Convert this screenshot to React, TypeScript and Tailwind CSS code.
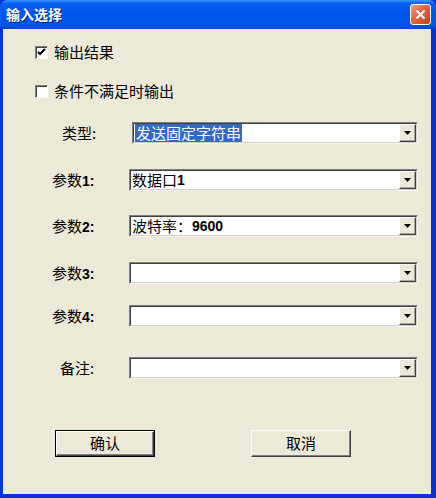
import React from 'react';

const cjk = "font-['Noto_Sans_CJK_SC','Noto_Sans',sans-serif]";

const Arrow = () => (
    <div className="w-[17px] h-full flex items-center justify-center bg-[#ECE9D8] border border-t-white border-l-white border-r-[#404040] border-b-[#404040] shadow-[inset_-1px_-1px_0_#ACA899]">
        <svg width="7" height="4" viewBox="0 0 7 4">
            <path d="M0 0h7L3.5 4z" fill="#000" />
        </svg>
    </div>
);

const Combo = ({ children, className = '' }: { children?: React.ReactNode; className?: string }) => (
    <div className={`h-[22px] flex items-stretch bg-white border border-t-[#808080] border-l-[#808080] border-r-[#F5F4EE] border-b-[#F5F4EE] ${className}`}>
        <div className="flex-1 flex items-stretch border border-t-[#404040] border-l-[#404040] border-r-[#D4D0C8] border-b-[#D4D0C8]">
            <div className="flex-1 flex items-center pl-[1px] whitespace-nowrap leading-[18px]">{children}</div>
            <Arrow />
        </div>
    </div>
);

const Num = ({ children }: { children: React.ReactNode }) => (
    <span className="font-['Liberation_Sans',sans-serif] font-bold text-[14px]">{children}</span>
);

const Check = ({ checked }: { checked?: boolean }) => (
    <div className="w-[13px] h-[13px] bg-white border border-t-[#808080] border-l-[#808080] border-r-white border-b-white shadow-[inset_1px_1px_0_#404040] flex items-center justify-center">
        {checked && (
            <svg width="9" height="9" viewBox="0 0 9 9">
                <path d="M1 4l2 2 5-5" stroke="#000" strokeWidth="2" fill="none" />
            </svg>
        )}
    </div>
);

const Button = ({ label, isDefault }: { label: string; isDefault?: boolean }) => (
    <div className={`w-[100px] h-[27px] ${isDefault ? 'border border-black' : ''}`}>
        <div className="w-full h-full flex items-center justify-center bg-[#ECE9D8] border border-t-white border-l-white border-r-[#404040] border-b-[#404040] shadow-[inset_-1px_-1px_0_#808080] text-[15px]">
            {label}
        </div>
    </div>
);

export default function App() {
    const rows = [
        { label: <>参数<Num>1:</Num></>, value: <>数据口<Num>1</Num></>, mt: 'mt-[24px]', pl: 'pl-[49px]' },
        { label: <>参数<Num>2:</Num></>, value: <>波特率：<Num>9600</Num></>, mt: 'mt-[23px]', pl: 'pl-[49px]' },
        { label: <>参数<Num>3:</Num></>, value: null, mt: 'mt-[24px]', pl: 'pl-[49px]' },
        { label: <>参数<Num>4:</Num></>, value: null, mt: 'mt-[20px]', pl: 'pl-[49px]' },
        { label: <>备注:</>, value: null, mt: 'mt-[29px]', pl: 'pl-[57px]' },
    ];

    return (
        <div className={`w-[436px] h-[498px] flex flex-col bg-[#0831D9] text-black ${cjk}`}>
            {/* title bar */}
            <div className="h-[29px] flex items-center justify-between px-[6px] rounded-t-[7px] bg-[linear-gradient(to_bottom,#3D95FF_0%,#0A5FEF_12%,#0058EE_40%,#0055EA_85%,#0046D4_100%)]">
                <span className="text-white font-bold text-[14px] [text-shadow:1px_1px_0_#0A1E6E]">输入选择</span>
                <div className="w-[21px] h-[21px] mr-[-1px] rounded-[3px] border border-white bg-[linear-gradient(135deg,#F0A088_0%,#E2633C_45%,#C2421C_100%)] flex items-center justify-center">
                    <svg width="11" height="11" viewBox="0 0 11 11">
                        <path d="M1.5 1.5l8 8M9.5 1.5l-8 8" stroke="#fff" strokeWidth="2.2" />
                    </svg>
                </div>
            </div>

            {/* body */}
            <div className="flex-1 mx-[3px] mr-[5px] mb-[4px] bg-[#ECE9D8] flex flex-col text-[15px]">
                <div className="flex items-center gap-[6px] pl-[32px] mt-[15px] h-[16px]">
                    <Check checked />
                    <span>输出结果</span>
                </div>
                <div className="flex items-center gap-[6px] pl-[32px] mt-[23px] h-[16px]">
                    <Check />
                    <span>条件不满足时输出</span>
                </div>

                <div className="flex items-center mt-[23px] pl-[59px]">
                    <span className="w-[70px]">类型:</span>
                    <Combo className="w-[286px]">
                        <span className="bg-[#316AC5] text-white px-[1px] leading-[18px]">发送固定字符串</span>
                    </Combo>
                </div>

                {rows.map((r, i) => (
                    <div key={i} className={`flex items-center ${r.mt} ${r.pl}`}>
                        <span className={i === 4 ? 'w-[69px]' : 'w-[77px]'}>{r.label}</span>
                        <Combo className="w-[289px]">{r.value}</Combo>
                    </div>
                ))}

                <div className="flex mt-[51px] pl-[52px] gap-[96px]">
                    <Button label="确认" isDefault />
                    <Button label="取消" />
                </div>
            </div>
        </div>
    );
}
